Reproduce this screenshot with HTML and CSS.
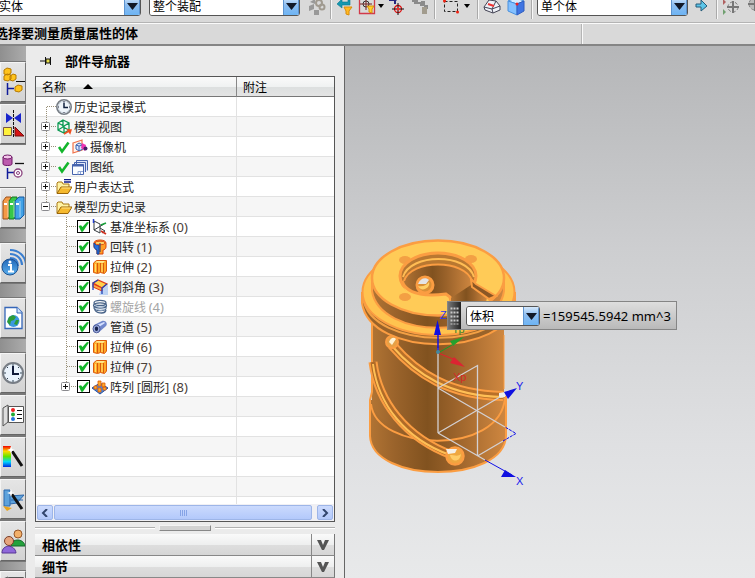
FILE: index.html
```html
<!DOCTYPE html>
<html lang="zh-CN">
<head>
<meta charset="utf-8">
<title>部件导航器</title>
<link rel="stylesheet" href="styles.css">
</head>
<body>
<svg class="defs" aria-hidden="true">
  <defs>
    <linearGradient id="body" x1="0" x2="1"><stop offset="0" stop-color="#b17434"/><stop offset=".18" stop-color="#9a632b"/><stop offset=".42" stop-color="#81521f"/><stop offset=".62" stop-color="#9a622a"/><stop offset="1" stop-color="#cf8740"/></linearGradient>
    <linearGradient id="arrowBg" x1="0" x2="0" y1="0" y2="1"><stop offset="0" stop-color="#d5e8fb"/><stop offset=".45" stop-color="#8dbdf0"/><stop offset="1" stop-color="#6db4f4"/></linearGradient>
    <linearGradient id="blueBall" x1="0" x2="0" y1="0" y2="1"><stop offset="0" stop-color="#2167b8"/><stop offset="1" stop-color="#5bb0ee"/></linearGradient>
    <linearGradient id="rainbow" x1="0" x2="0" y1="0" y2="1"><stop offset="0" stop-color="#f20000"/><stop offset=".25" stop-color="#ffd800"/><stop offset=".5" stop-color="#5ee600"/><stop offset=".75" stop-color="#00d8ff"/><stop offset="1" stop-color="#0028e0"/></linearGradient>
  </defs>
  <symbol id="drop" viewBox="0 0 16 18"><rect width="16" height="18" fill="url(#arrowBg)"/><path d="M.5 0v18M15.500 0v18" stroke="#5d93cf"/><path d="M3 6h11l-5.500 7z" fill="#111827"/></symbol>
  <symbol id="g-first" viewBox="0 0 20 19"><path d="M10.500 10v9M11 9.500h9" stroke="#999078" stroke-dasharray="1 1" fill="none"/></symbol>
  <symbol id="g-mid" viewBox="0 0 20 19"><path d="M10.500 0v19M11 9.500h9" stroke="#999078" stroke-dasharray="1 1" fill="none"/></symbol>
  <symbol id="g-plus" viewBox="0 0 20 19"><path d="M10.500 0v19M11 9.500h9" stroke="#999078" stroke-dasharray="1 1"/><rect x="5.500" y="5.500" width="8" height="8" rx="1" fill="#fff" stroke="#8a8a8e"/><path d="M7 9.500h5M9.500 7v5" stroke="#111"/></symbol>
  <symbol id="g-endplus" viewBox="0 0 20 19"><path d="M10.500 0v6M11 9.500h9" stroke="#999078" stroke-dasharray="1 1"/><rect x="5.500" y="5.500" width="8" height="8" rx="1" fill="#fff" stroke="#8a8a8e"/><path d="M7 9.500h5M9.500 7v5" stroke="#111"/></symbol>
  <symbol id="g-minus" viewBox="0 0 20 19"><path d="M10.500 0v6M11 9.500h9" stroke="#999078" stroke-dasharray="1 1"/><rect x="5.500" y="5.500" width="8" height="8" rx="1" fill="#fff" stroke="#8a8a8e"/><path d="M7 9.500h5" stroke="#111"/></symbol>
  <symbol id="clock" viewBox="0 0 16 16"><circle cx="8" cy="8" r="7.200" fill="#eef4fa" stroke="#777d85" stroke-width="1.600"/><circle cx="8" cy="8" r="5.800" fill="none" stroke="#b9c4d0" stroke-width=".7"/><path d="M8 3.500V8.500h4" fill="none" stroke="#10213f" stroke-width="1.500"/><path d="M8 2v1M8 13v1M2 8h1M13 8h1" stroke="#334"/></symbol>
  <symbol id="mview" viewBox="0 0 16 16"><path d="M7 1l6 3v7l-5 3-6-3V4zM2 4l6 3 5-3M8 7v7M7 1v7l-5 3M7 8l6 3" fill="none" stroke="#0c9a52" stroke-width="1.300"/><path d="M8 15l5-3M15 11l-3 0 2 3z" stroke="#f05020" fill="#f05020" stroke-width="1.500"/></symbol>
  <symbol id="tick" viewBox="0 0 16 16"><path d="M3 8l3 4.500L12.500 3.500" fill="none" stroke="#13b52b" stroke-width="2.600"/></symbol>
  <symbol id="camera" viewBox="0 0 16 16"><path d="M1 4l9-3v10L1 14z" fill="#fff4ec" stroke="#f0714a" stroke-width="1.200"/><path d="M4 6l3-2 4 2v4l-4 2-3-2zM4 6l3 1 4-1M7 7v5" fill="#dce8ff" stroke="#3d62b0"/><path d="M10 4l4 2-1 6-4-3z" fill="#ef35b4"/><circle cx="13.500" cy="9.500" r="2" fill="#442066"/></symbol>
  <symbol id="sheet" viewBox="0 0 16 16"><path d="M4.500 11V1.500h11v10M2.500 13V3.500h11V13" fill="#dfe6f8" stroke="#4563ad"/><path d="M.5 5.500h11v10H.5z" fill="#fafcff" stroke="#4563ad"/><path d="M.5 6.500h11" stroke="#4563ad" stroke-width="2"/><path d="M6 12.500h5M6 12.500v3M8.500 13v2" stroke="#8fa6d6"/></symbol>
  <symbol id="folder" viewBox="0 0 16 16"><path d="M1 14V4l1-1h4l1 2h6v3" fill="#fff3a4" stroke="#a97815"/><path d="M1 14.500l4-6.500h11l-4 6.500z" fill="#f5b92e" stroke="#9a6509"/><path d="M5.500 9h9" stroke="#ffe489"/></symbol>
  <symbol id="folderx" viewBox="0 0 16 16"><use href="#folder"/><path d="M8 .5h7M8 3h7" stroke="#111b8a" stroke-width="1.300"/></symbol>
  <symbol id="csys" viewBox="0 0 16 16"><path d="M2 2v9l6 3V5zM2 11l10-6M8 9l5 3-3 2" fill="none" stroke="#333a3f"/><path d="M1.500 4V0" stroke="#2440d0" stroke-width="1.500"/><path d="M9 6l5-2" stroke="#1ba13c" stroke-width="1.600"/><path d="M9 12l5 3" stroke="#d03020" stroke-width="1.600"/></symbol>
  <symbol id="revolve" viewBox="0 0 16 16"><path d="M2 4c0-4 12-4 12 0v4c0 2-2 3-3 3v4H5v-4c-2-1-3-2-3-4z" fill="#ff9d25" stroke="#d9440d"/><path d="M2 4c1 2 4 2 5 2v9H5v-4c-2-1-3-2-3-4z" fill="#2870dc" stroke="#1746a0"/><ellipse cx="8" cy="4" rx="5" ry="1.800" fill="#ffd367" stroke="#df5618"/><path d="M8 4v9" stroke="#17327c"/></symbol>
  <symbol id="extrude" viewBox="0 0 16 16"><path d="M1.500 4l3-2.500h10V12l-2 2.500-4-1-3 1-4-1z" fill="#ffa726" stroke="#dc5a0a"/><path d="M3 3.500l2-1.500h8l-2 2z" fill="#ffe88c"/><path d="M5.500 4v10M8.500 4v9M11.500 4v10" stroke="#d95a0c"/><path d="M3.500 5v8M10 5v8" stroke="#ffe06a"/></symbol>
  <symbol id="chamfer" viewBox="0 0 16 16"><path d="M9 10l7-4v10H7z" fill="#bdd3f4"/><path d="M1 4l5-3 9 4-5 4z" fill="#ffd04e" stroke="#e23919" stroke-width="1.300"/><path d="M1 5l9 4v3L1 8z" fill="#ffab42" stroke="#e23919"/><path d="M1 11V4l5-3M10 15V9l5-4" fill="none" stroke="#2144ba" stroke-width="1.300"/></symbol>
  <symbol id="helix" viewBox="0 0 16 16"><g fill="none" stroke="#496489" stroke-width="1.300"><ellipse cx="8" cy="4" rx="6" ry="2.600"/><ellipse cx="8" cy="6.500" rx="6.500" ry="2.600"/><ellipse cx="8" cy="9" rx="6" ry="2.600"/><path d="M3 10c-1 4 10 6 11 1"/></g><path d="M3 6c4 3 8 3 11 0M3 9c4 3 8 3 11 0" fill="none" stroke="#a8bfda"/></symbol>
  <symbol id="tube" viewBox="0 0 16 16"><path d="M2 6l8-4c4-1 6 3 4 5l-8 7z" fill="#7187cb"/><path d="M5 6l7-3 1 1-6 4z" fill="#d5e0ff"/><ellipse cx="4.500" cy="9.800" rx="3.500" ry="4" fill="#9aaadc" stroke="#4c5b98"/><ellipse cx="4.500" cy="9.800" rx="1.700" ry="2.200" fill="#18234d"/></symbol>
  <symbol id="pattern" viewBox="0 0 16 16"><path d="M0 9l8-5 8 5-8 6z" fill="#4c87da" stroke="#2351a1"/><g fill="#ffab28" stroke="#dc5a0a" stroke-width=".8"><path d="M6 2h3v5H6zM2 7h3v3H2zM10 4h3v4h-3zM6 9h3v4H6zM11 8h3v3h-3z"/></g></symbol>
</svg>

<header class="toolbar">
  <label class="combo filter"><select aria-label="类型过滤器"><option>实体</option></select><svg><use href="#drop"/></svg></label>
  <label class="combo scope"><select aria-label="选择范围"><option>整个装配</option></select><svg><use href="#drop"/></svg></label>
  <button class="tool" aria-label="部件间链接" disabled><svg viewBox="0 0 18 18"><path d="M1 8l5-2v5l-5 2zM6 12h5v5H6zM2 4l5-3v5z" fill="#999"/><circle cx="11" cy="5" r="3" fill="none" stroke="#a09a90" stroke-width="2"/><circle cx="14" cy="9" r="2.500" fill="none" stroke="#a09a90" stroke-width="2"/></svg></button>
  <i class="rule"></i>
  <button class="tool" aria-label="重置过滤器"><svg viewBox="0 0 18 18"><path d="M6 1v3h6V1h2v6H6v3L1 6z" fill="#1597b0" stroke="#08788f" stroke-width=".6"/><path d="M8 9h8l-3 4v4l-3-1v-3z" fill="#ffb923" stroke="#d98c0b"/></svg></button>
  <button class="tool" aria-label="选择过滤"><svg viewBox="0 0 18 18"><path d="M1.500 0v15.500h15V0" fill="none" stroke="#d23a4a" stroke-width="1.300"/><circle cx="8" cy="6" r="3" fill="none" stroke="#333"/><path d="M2 6h12M8 0v12" stroke="#722"/><path d="M9 8h7l-2 3v4l-3-1v-3z" fill="#ffd32b" stroke="#d98c0b"/></svg></button>
  <svg class="caret" viewBox="0 0 6 4"><path d="M0 0h6L3 4z"/></svg>
  <button class="tool wide" aria-label="捕捉点"><svg viewBox="0 0 18 18"><path d="M1 2l6 0-2-3M7 2v4" fill="none" stroke="#26277e" stroke-width="2"/><circle cx="10" cy="11" r="3.500" fill="none" stroke="#d11" stroke-width="1.300"/><path d="M4 11h12M10 5v12" stroke="#111"/><circle cx="10" cy="11" r="1.500" fill="#f22"/></svg></button>
  <button class="tool" aria-label="路径" disabled><svg viewBox="0 0 18 18"><path d="M0 1h6v3h3V3h4v4h3v4h-4V8H8V6H2V4H0z" fill="#8b8b8b"/><path d="M10 9h5v7h-5z" fill="#a29c8e"/></svg></button>
  <i class="rule"></i>
  <button class="tool wide" aria-label="矩形选择"><svg viewBox="0 0 18 18"><path d="M2.500 3.500h13v10h-13z" fill="none" stroke="#222" stroke-dasharray="3 2"/><circle cx="2.500" cy="3" r="1.500" fill="#e21"/><circle cx="15.500" cy="14" r="1.500" fill="#e21"/></svg></button>
  <svg class="caret" viewBox="0 0 6 4"><path d="M0 0h6L3 4z"/></svg>
  <i class="rule gap"></i>
  <button class="tool" aria-label="线框"><svg viewBox="0 0 18 18"><path d="M1 9l5-7 7 1 4 5v4l-7 3-8-3z" fill="#eef1f7" stroke="#445"/><path d="M1 9l8 2 8-3M9 11l1 4M9 11l4-8" fill="none" stroke="#445"/><path d="M5 6l6 2" stroke="#e33" stroke-width="2"/></svg></button>
  <button class="tool wide" aria-label="着色"><svg viewBox="0 0 18 18"><path d="M1 3l8-3 8 3-7 3z" fill="#d7ecff" stroke="#4a90dd"/><path d="M1 3l9 3v11l-9-4z" fill="#83c0ff" stroke="#4a90dd"/><path d="M10 6l7-3v10l-7 4z" fill="#4075e2" stroke="#315fc0"/><circle cx="10" cy="6" r="1.500" fill="#e22"/></svg></button>
  <i class="rule"></i>
  <label class="combo rulebox"><select aria-label="体规则"><option>单个体</option></select><svg><use href="#drop"/></svg></label>
  <button class="tool wide" aria-label="下一个"><svg viewBox="0 0 18 18"><path d="M4 6h5V2l6 6-6 5v-4H4z" fill="#5cc5e8" stroke="#245b78"/></svg></button>
  <i class="rule"></i>
  <button class="tool" aria-label="移动" disabled><svg viewBox="0 0 18 18"><path d="M1 1l3 3-3 3z" fill="#b06060"/><path d="M1 11l3 3-3 3z" fill="#70a070"/><circle cx="11" cy="9" r="5" fill="none" stroke="#777" stroke-dasharray="3 2"/><path d="M5 9h12M11 3v12" stroke="#777" stroke-width="2"/></svg></button>
  <button class="tool wide" aria-label="旋转" disabled><svg viewBox="0 0 18 18"><circle cx="9" cy="6" r="6" fill="#bbb" stroke="#888" stroke-dasharray="3 2"/><path d="M2 6h14M9 0v13" stroke="#777" stroke-width="2"/></svg></button>
</header>
<div class="cue"><p>选择要测量质量属性的体</p><p></p></div>

<main class="work">
  <nav class="tabs" aria-label="资源条">
    <button class="tab lead" aria-label="装配导航器"><svg viewBox="0 0 24 30"><g fill="#ffc31c" stroke="#b77a00"><path d="M3 3l3-2 4 1v4l-3 2-4-1zM3 9l3-2 4 1v4l-3 2-4-1zM9 9l3-2 3 1v4l-3 2-3-1z"/><path d="M14 20l3-2 4 1v4l-3 2-4-1z"/></g><path d="M15 14.500h9" stroke="#111"/><path d="M6.500 16v12M7 21.500h6" stroke="#111c9a" stroke-width="1.500"/></svg></button>
    <button class="tab" aria-label="约束导航器"><svg viewBox="0 0 24 30"><path d="M5 4l7 5-7 5zM20 4l-7 5 7 5z" fill="#1925cc"/><path d="M12.500 1v27" stroke="#111" stroke-dasharray="3 1"/><path d="M2.500 18.500h8v8h-8z" fill="#fff13b" stroke="#754"/><path d="M14 18l9 9h-9z" fill="#d81313" stroke="#711"/></svg></button>
    <button class="tab active" aria-label="部件导航器"><svg viewBox="0 0 24 30"><path d="M2 6v7c0 2 9 2 9 0V6" fill="#bc5cae" stroke="#6f1967"/><ellipse cx="6.500" cy="6" rx="4.500" ry="2" fill="#f2c7e9" stroke="#6f1967"/><path d="M14 12.500h9" stroke="#111" stroke-width="1.300"/><path d="M6.500 17v11M7 21.500h6" stroke="#111c9a" stroke-width="1.500"/><circle cx="17" cy="22" r="4" fill="#fff" stroke="#89417d" stroke-width="1.300"/><circle cx="17" cy="22" r="1.500" fill="none" stroke="#89417d"/></svg></button>
    <button class="tab" aria-label="重用库"><svg viewBox="0 0 24 30"><path d="M2 8l3-4h5v18l-3 4H2z" fill="#f49a47" stroke="#9a511a"/><path d="M8 8l3-4h5v18l-3 4H8z" fill="#37c848" stroke="#167522"/><path d="M14 8l4-4h5v18l-4 4h-5z" fill="#41a2e7" stroke="#17589e"/><path d="M3 11h3M9 11h3M15 11h3" stroke="#fff" stroke-width="2"/><path d="M7 8v16M13 8v16M19 8v16" stroke="#fff8"/></svg></button>
    <button class="tab spaced" aria-label="信息"><svg viewBox="0 0 24 30"><path d="M9 10c5 0 8 3 8 8M9 6c7 0 12 5 12 11M9 2c9 0 15 6 16 14" fill="none" stroke="#397ed0" stroke-width="2"/><circle cx="9" cy="19" r="8" fill="url(#blueBall)" stroke="#1c5292"/><path d="M7 17h3v6M7 23.500h6" fill="none" stroke="#fff" stroke-width="2"/><circle cx="9" cy="14" r="1.500" fill="#fff"/></svg></button>
    <button class="tab spaced" aria-label="网页浏览器"><svg viewBox="0 0 24 30"><path d="M4 4.500h12l5 5v16H4z" fill="#fff" stroke="#3566b8" stroke-width="1.300"/><path d="M16 4v6h5" fill="#cfe2fb" stroke="#3566b8"/><circle cx="12.500" cy="18" r="6" fill="#3c99df"/><path d="M8 14l4-2 3 2-2 3-3 1-1 4-3-3zM15 17l3 0-2 5-3-1z" fill="#2e9c38"/></svg></button>
    <button class="tab spaced" aria-label="历史记录"><svg viewBox="0 0 24 30"><circle cx="12" cy="15" r="10" fill="#eaf3fc" stroke="#777d85" stroke-width="2"/><path d="M12 8v8h6" fill="none" stroke="#111a38" stroke-width="2"/><path d="M12 6v2M12 22v2M3 15h2M19 15h2M6 9l1 1M18 9l-1 1M6 21l1-1M18 21l-1-1" stroke="#345"/></svg></button>
    <button class="tab" aria-label="系统材料"><svg viewBox="0 0 24 30"><path d="M2 8l5-3v17l-5 4z" fill="#ddd" stroke="#555"/><path d="M7.500 6.500h15v16h-15z" fill="#fff" stroke="#555"/><circle cx="12" cy="10" r="2" fill="#e22"/><circle cx="12" cy="14.500" r="2" fill="#21aa35"/><circle cx="12" cy="19" r="2" fill="#2474dd"/><path d="M16 10.500h5M16 14.500h5M16 18.500h5" stroke="#111"/></svg></button>
    <button class="tab" aria-label="可视化"><svg viewBox="0 0 24 30"><path d="M2 4h8v21H2z" fill="url(#rainbow)"/><path d="M11 9l10 15" stroke="#111" stroke-width="3"/><path d="M10 4l1 3 3 1-3 1-1 3-1-3-3-1 3-1z" fill="#fff"/></svg></button>
    <button class="tab" aria-label="场景"><svg viewBox="0 0 24 30"><path d="M3 6h6v16H3zM9 12l14-1-7 8-7 1M10 16h12" fill="#5da2dc" stroke="#2d68ac"/><path d="M2 22l9 2-5 3z" fill="#e8a31c"/><path d="M10 9l11 16" stroke="#111" stroke-width="3"/><path d="M10 5l1 3 3 1-3 1-1 3-1-3-3-1 3-1z" fill="#fff"/></svg></button>
    <button class="tab" aria-label="角色"><svg viewBox="0 0 24 30"><circle cx="17" cy="8" r="4" fill="#f3b06a" stroke="#96572a"/><path d="M10 20c0-8 13-8 14 0z" fill="#24a13c" stroke="#12682a"/><circle cx="8" cy="15" r="4.500" fill="#e6a47c" stroke="#7a3d28"/><path d="M1 27c0-9 13-9 14 0z" fill="#8f68da" stroke="#563595"/></svg></button>
    <button class="tab late" aria-label="更多"><svg viewBox="0 0 24 30"><path d="M2 3l5-2v20H2z" fill="#ddd" stroke="#555"/><path d="M7.500 1.500h15v15h-15z" fill="#fff" stroke="#555"/><path d="M9 3h12v10H9z" fill="#e23"/><path d="M12 3h5v10h-5z" fill="#9cf"/></svg></button>
  </nav>

  <section class="panel">
    <h1 class="title"><svg viewBox="0 0 12 10"><path d="M0 5h5M5.500 1v8M10.500 1v8M6 3h4v4H6z" fill="#e8df4b" stroke="#111"/></svg>部件导航器</h1>
    <div class="tree">
      <div class="rows">
        <table>
          <colgroup><col class="c-name"><col></colgroup>
          <thead><tr><th>名称<svg class="sort" viewBox="0 0 10 5"><path d="M5 0l5 5H0z"/></svg></th><th>附注</th></tr></thead>
          <tbody>
            <tr><td><div class="node"><svg class="guide"><use href="#g-first"/></svg><svg class="ic"><use href="#clock"/></svg><span>历史记录模式</span></div></td><td></td></tr>
            <tr><td><div class="node"><button class="twist" aria-label="展开"><svg class="guide"><use href="#g-plus"/></svg></button><svg class="ic"><use href="#mview"/></svg><span>模型视图</span></div></td><td></td></tr>
            <tr><td><div class="node"><button class="twist" aria-label="展开"><svg class="guide"><use href="#g-plus"/></svg></button><svg class="ic"><use href="#tick"/></svg><svg class="ic"><use href="#camera"/></svg><span>摄像机</span></div></td><td></td></tr>
            <tr><td><div class="node"><button class="twist" aria-label="展开"><svg class="guide"><use href="#g-plus"/></svg></button><svg class="ic"><use href="#tick"/></svg><svg class="ic"><use href="#sheet"/></svg><span>图纸</span></div></td><td></td></tr>
            <tr><td><div class="node"><button class="twist" aria-label="展开"><svg class="guide"><use href="#g-plus"/></svg></button><svg class="ic"><use href="#folderx"/></svg><span>用户表达式</span></div></td><td></td></tr>
            <tr><td><div class="node"><button class="twist" aria-label="折叠"><svg class="guide"><use href="#g-minus"/></svg></button><svg class="ic"><use href="#folder"/></svg><span>模型历史记录</span></div></td><td></td></tr>
            <tr><td><label class="node sub"><svg class="guide"><use href="#g-mid"/></svg><input type="checkbox" checked><svg class="ic"><use href="#csys"/></svg><span>基准坐标系 <b>(0)</b></span></label></td><td></td></tr>
            <tr><td><label class="node sub"><svg class="guide"><use href="#g-mid"/></svg><input type="checkbox" checked><svg class="ic"><use href="#revolve"/></svg><span>回转 <b>(1)</b></span></label></td><td></td></tr>
            <tr><td><label class="node sub"><svg class="guide"><use href="#g-mid"/></svg><input type="checkbox" checked><svg class="ic"><use href="#extrude"/></svg><span>拉伸 <b>(2)</b></span></label></td><td></td></tr>
            <tr><td><label class="node sub"><svg class="guide"><use href="#g-mid"/></svg><input type="checkbox" checked><svg class="ic"><use href="#chamfer"/></svg><span>倒斜角 <b>(3)</b></span></label></td><td></td></tr>
            <tr><td><label class="node sub dim"><svg class="guide"><use href="#g-mid"/></svg><input type="checkbox" checked><svg class="ic"><use href="#helix"/></svg><span>螺旋线 <b>(4)</b></span></label></td><td></td></tr>
            <tr><td><label class="node sub"><svg class="guide"><use href="#g-mid"/></svg><input type="checkbox" checked><svg class="ic"><use href="#tube"/></svg><span>管道 <b>(5)</b></span></label></td><td></td></tr>
            <tr><td><label class="node sub"><svg class="guide"><use href="#g-mid"/></svg><input type="checkbox" checked><svg class="ic"><use href="#extrude"/></svg><span>拉伸 <b>(6)</b></span></label></td><td></td></tr>
            <tr><td><label class="node sub"><svg class="guide"><use href="#g-mid"/></svg><input type="checkbox" checked><svg class="ic"><use href="#extrude"/></svg><span>拉伸 <b>(7)</b></span></label></td><td></td></tr>
            <tr><td><div class="node sub"><button class="twist" aria-label="展开"><svg class="guide"><use href="#g-endplus"/></svg></button><input type="checkbox" checked id="p8"><svg class="ic"><use href="#pattern"/></svg><label for="p8">阵列 <b>[</b>圆形<b>] (8)</b></label></div></td><td></td></tr>
            <tr><td></td><td></td></tr>
            <tr><td></td><td></td></tr>
            <tr><td></td><td></td></tr>
            <tr><td></td><td></td></tr>
            <tr><td></td><td></td></tr>
            <tr><td></td><td></td></tr>
          </tbody>
        </table>
      </div>
      <div class="hscroll">
        <button aria-label="向左滚动"><svg viewBox="0 0 8 8"><path d="M6 0L2 4l4 4"/></svg></button>
        <div class="thumb"><i></i><i></i><i></i><i></i></div>
        <button aria-label="向右滚动"><svg viewBox="0 0 8 8"><path d="M2 0l4 4-4 4"/></svg></button>
      </div>
    </div>
    <div class="splitter"><hr><i></i><hr></div>
    <button class="fold"><span>相依性</span><svg viewBox="0 0 12 10"><path d="M0 0h4l2 5 2-5h4L7 10H5z"/></svg></button>
    <button class="fold"><span>细节</span><svg viewBox="0 0 12 10"><path d="M0 0h4l2 5 2-5h4L7 10H5z"/></svg></button>
  </section>

  <section class="view">
    <svg class="model" viewBox="355 230 180 265" role="img" aria-label="零件模型">
      <path d="M370 400V436C372 484 504 484 506 436V396z" fill="url(#body)"/>
      <path d="M372 315V400C380 450 496 450 504 400V315z" fill="url(#body)"/>
      <g fill="none" stroke="#fb9d42" stroke-width="2">
        <path d="M372 318V392L370 400V436C372 484 504 484 506 436V396"/>
        <path d="M371 404C376 452 500 456 505 398"/>
        <path d="M504 335V389" stroke-width="1"/>
      </g>
      <g fill="none">
        <path d="M392 345C417 374 449 395 503 396" stroke="#fb9d42" stroke-width="10"/>
        <path d="M392 345C417 374 449 395 503 396" stroke="#b87029" stroke-width="6"/>
        <path d="M392 346C417 375 449 396 503 397" stroke="#ffbf55" stroke-width="2"/>
        <path d="M373 362C378 402 406 438 452 455" stroke="#fb9d42" stroke-width="9"/>
        <path d="M373 362C378 402 406 438 452 455" stroke="#b06b28" stroke-width="5"/>
        <path d="M373 364C378 404 405 439 450 455" stroke="#ffbf55" stroke-width="2"/>
      </g>
      <circle cx="392" cy="342" r="6" fill="#e6a146" stroke="#fb9d42" stroke-width="2"/>
      <path d="M389 342c2-5 5-5 7-3l-4 6z" fill="#fff1d0"/>
      <circle cx="455" cy="456" r="8.500" fill="#efa740" stroke="#fb9d42" stroke-width="2.500"/>
      <path d="M450 455c1 7 10 8 11-1-3 3-7 1-11 1z" fill="#ffcc68"/>
      <path d="M446 449l11 0-2 4-7 1z" fill="#f5efe6"/>
      <path d="M499 393l6-1v5l-6 1z" fill="#eee"/>

      <path d="M362 293V303C370 358 507 358 515 303V293z" fill="#99632a" stroke="#fb9d42" stroke-width="2"/>
      <path d="M363 298C371 351 506 351 514 298" fill="none" stroke="#f3a044" stroke-width="2"/>
      <ellipse cx="438.500" cy="292" rx="76" ry="43" fill="#ffc34f" stroke="#fb9d42" stroke-width="2"/>
      <path d="M372 278V291C380 340 497 340 504 291V278z" fill="url(#body)" stroke="#fb9d42" stroke-width="2"/>
      <ellipse cx="438" cy="278" rx="66" ry="37.500" fill="#ffcb57" stroke="#fb9d42" stroke-width="2.500"/>
      <g fill="#f3a044"><ellipse cx="405" cy="260" rx="6" ry="4"/><ellipse cx="471" cy="259" rx="6" ry="4"/><ellipse cx="405" cy="297" rx="6" ry="4"/></g>
      <ellipse cx="438" cy="276" rx="38" ry="23" fill="#b97831" stroke="#fb9d42" stroke-width="3"/>
      <path d="M404 282C409 258 465 258 472 282V290L456 299H426C412 296 406 290 404 282z" fill="url(#body)"/>
      <path d="M403 277C410 253 467 253 474 277" fill="none" stroke="#ffbd54" stroke-width="2"/>
      <path d="M404 281C411 259 465 259 472 281" fill="none" stroke="#fb9d42" stroke-width="2"/>
      <path d="M403 283C410 296 424 296 446 294l4 3 1 5h-20C416 300 404 294 403 283z" fill="#ffcb57"/>
      <circle cx="425" cy="285" r="8" fill="#d99037" stroke="#fb9d42" stroke-width="3"/>
      <path d="M418 284c2-6 8-7 11-4l-3 4z" fill="#e4e4e5"/>
      <path d="M418 286c5 1 9-1 11-4 2 6-8 11-11 4z" fill="#ffd067"/>
      <path d="M402 281C406 293 420 297 446 294l4 3 1 5" fill="none" stroke="#fb9d42" stroke-width="3"/>
      <path d="M451 298l20-13 16 13-2 8h-34z" fill="url(#body)"/>
      <path d="M471 279l1 8 17 12 7-3-20-12z" fill="#8b5725" stroke="#fb9d42" stroke-width="2"/>

      <g fill="none" stroke="#d3d0d2" stroke-width="1.300"><path d="M438 348V433M438 388L477.500 365.500V456M438 388L505 427M438 433L500 397M438 433L485 460M477.500 456L503 441"/></g>
      <g fill="none" stroke="#1010e8"><path d="M485 460L512 475"/><path d="M503 441L516 433.500L505 427" stroke-dasharray="3 1"/><path d="M438 353V325" stroke-width="1.500"/></g>
      <path d="M437.500 320l3.500 15h-7zM517 388l-13 4 4 7zM516 477l-11-7-4 7z" fill="#1010e0"/>
      <path d="M438 353l14-8" stroke="#18a028"/><path d="M464 337l-14 4 3 5z" fill="#25a02d"/>
      <path d="M438 353l15 6" stroke="#e4202d"/><path d="M465 367l-11-10-4 6z" fill="#dc2432"/>
      <circle cx="438" cy="352" r="2" fill="#4389a0"/>
      <g class="axis"><text x="440" y="319" fill="#3037ee">Z</text><text x="452" y="333" fill="#39852c">Yp</text><text x="453" y="381" fill="#d52a27">Xp</text><text x="516" y="390" fill="#1c1cec">Y</text><text x="516" y="485" fill="#1c1cec">X</text></g>
    </svg>
    <div class="measure">
      <svg class="grip" viewBox="0 0 13 26"><path d="M3.500 5v17M6.500 5v17M9.500 5v17" stroke="#c9c9c9" stroke-width="2" stroke-dasharray="2 2"/></svg>
      <label class="combo"><select aria-label="测量类型"><option>体积</option></select><svg><use href="#drop"/></svg></label>
      <output>=159545.5942 mm^3</output>
    </div>
  </section>
</main>
</body>
</html>
```
FILE: styles.css
```css
* { box-sizing: border-box; }
html, body { height: 100%; margin: 0; }
body {
  display: flex;
  flex-direction: column;
  overflow: hidden;
  background: #ebebeb;
  color: #000;
  font: 12px/16px "Noto Sans CJK SC", sans-serif;
}
svg { display: block; flex: none; }
button, select, input { margin: 0; padding: 0; font: inherit; color: inherit; }
button { border: 0; background: none; }
.defs { position: absolute; width: 0; height: 0; }

/* toolbar */
.toolbar {
  display: flex;
  flex: none;
  align-items: flex-end;
  height: 23px;
  padding-bottom: 6px;
  overflow: hidden;
  background: #d9d9d9;
  border-bottom: 1px solid #b4b4b4;
}
.combo {
  display: grid;
  flex: none;
  height: 20px;
  overflow: hidden;
  background: #fff;
  border: 1px solid #555;
  border-radius: 3px;
}
.combo select {
  grid-area: 1 / 1;
  appearance: none;
  width: 100%;
  padding-left: 3px;
  border: 0;
  outline: 0;
  background: #fff;
  line-height: 18px;
}
.combo svg { grid-area: 1 / 1; justify-self: end; width: 16px; height: 18px; pointer-events: none; }
.filter { width: 146px; margin-left: -5px; }
.scope { width: 151px; margin: 0 6px 0 8px; }
.rulebox { width: 151px; margin-left: 2px; }
.tool { flex: none; width: 20px; margin: 0 1px; }
.tool svg { width: 18px; height: 18px; margin: 0 auto; }
.tool.wide { width: 24px; }
.rule { flex: none; width: 2px; height: 20px; margin: 0 2px -3px; background: #f8f8f8; border-left: 1px solid #aaa; }
.rule.gap { margin-left: 7px; }
.caret { width: 6px; height: 4px; margin-bottom: 8px; }

.cue {
  display: flex;
  flex: none;
  height: 23px;
  background: #d9d9d9;
  border-top: 1px solid #fafafa;
  border-bottom: 2px solid #858585;
}
.cue p { flex: 41; margin: 0 0 0 -5px; border-right: 1px solid #b5b5b5; font: bold 13px/18px "Noto Sans CJK SC", sans-serif; }
.cue p + p { flex: 12; margin: 0; border: 0; border-left: 1px solid #fafafa; }

.work { display: flex; flex: 1; min-height: 0; }

/* resource bar */
.tabs {
  display: flex;
  flex: none;
  flex-direction: column;
  gap: 2px;
  width: 26px;
  overflow: hidden;
  background: linear-gradient(90deg, #8f8f8f, #acacac);
}
.tab {
  flex: none;
  height: 40px;
  background: linear-gradient(#e5e5e5, #d3d3d3);
  border: 1px solid #f5f5f5;
  border-right-color: #777;
  border-bottom-color: #666;
  outline: 1px solid #777;
}
.tab svg { width: 24px; height: 30px; }
.tab.lead { margin-top: 16px; }
.tab.active { background: #ebebeb; border-color: #ebebeb; outline-color: #ebebeb; }
.tab.spaced { margin-top: 13px; }
.tab.late { margin-top: 8px; }

/* navigator */
.panel {
  display: flex;
  flex: none;
  flex-direction: column;
  width: 319px;
  padding: 0 9px;
  border-right: 1px solid #666;
  background: #ebebeb;
}
.title {
  display: flex;
  flex: none;
  align-items: center;
  gap: 13px;
  height: 30px;
  margin: 0;
  padding-left: 5px;
  font: bold 13px/18px "Noto Sans CJK SC", sans-serif;
}
.title svg { width: 12px; height: 10px; }
.tree {
  display: flex;
  flex: 1;
  flex-direction: column;
  min-height: 0;
  border: 1px solid #555;
  background: #fff;
}
.rows { flex: 1; min-height: 0; overflow: hidden; }
table { width: 100%; table-layout: fixed; border-collapse: separate; border-spacing: 0; }
.c-name { width: 201px; }
th, td { height: 20px; padding: 0; border-bottom: 1px solid #e2e2e2; border-right: 1px solid #e2e2e2; }
th {
  padding-left: 6px;
  text-align: left;
  font-weight: normal;
  background: linear-gradient(#fafafa, #f0f2f2 50%, #dcdfdf 51%, #e4e4e4);
  border-bottom-color: #777;
  border-right-color: #888;
}
td:last-child, th:last-child { border-right: 0; }
tbody tr:nth-child(even) { background: #f6f6f6; }
.sort { display: inline-block; width: 10px; height: 5px; margin: 0 0 3px 17px; }
.node { display: flex; align-items: center; height: 19px; color: #222; white-space: nowrap; }
.node.sub { padding-left: 20px; }
.node span, .node label { padding-left: 2px; }
.node b { font: 13px/16px "Noto Sans", sans-serif; color: #4a4038; }
.node.dim, .node.dim b { color: #a5a5a5; }
.guide { width: 20px; height: 19px; }
.ic { width: 16px; height: 16px; }
.twist { height: 19px; }
input[type="checkbox"] {
  appearance: none;
  flex: none;
  width: 13px;
  height: 13px;
  margin: 0 2px 0 1px;
  border: 1px solid #000;
  background: #fff;
}
input[type="checkbox"]:checked::before {
  content: "";
  display: block;
  height: 11px;
  background: #12b42a;
  clip-path: polygon(5% 45%, 28% 38%, 40% 55%, 82% 8%, 100% 14%, 44% 98%, 30% 98%);
}

.hscroll { display: flex; flex: none; height: 17px; padding: 1px; gap: 1px; background: #f0f0f4; }
.hscroll button, .thumb {
  background: linear-gradient(#cbdafd, #b3c9fb);
  border: 1px solid #9db5e8;
  border-radius: 2px;
}
.hscroll button { width: 16px; }
.hscroll button svg { width: 8px; height: 8px; margin: 0 auto; fill: none; stroke: #31456d; stroke-width: 2; }
.thumb { display: flex; flex: 1; align-items: center; justify-content: center; gap: 1px; margin-right: 4px; }
.thumb i { width: 1px; height: 6px; background: #86a4e6; }

.splitter { display: flex; flex: none; align-items: center; gap: 4px; height: 12px; }
.splitter hr { flex: 1; margin: 0; border: 0; border-top: 1px solid #b0b0b0; border-bottom: 1px solid #fff; }
.splitter i { width: 52px; height: 6px; background: #d2d2d2; border: 1px solid #f2f2f2; border-right-color: #888; border-bottom-color: #888; }
.fold {
  display: flex;
  flex: none;
  align-items: center;
  height: 22px;
  padding: 0 5px 0 7px;
  background: linear-gradient(#fafafa, #eeefef 50%, #dedede 51%, #d6d6d6);
  border-right: 1px solid #777;
  border-bottom: 1px solid #888;
  text-align: left;
  font: bold 13px/18px "Noto Sans CJK SC", sans-serif;
}
.fold span { flex: 1; border-right: 1px solid #888; line-height: 21px; }
.fold svg { width: 12px; height: 10px; margin-left: 5px; fill: #555; }

/* graphics window */
.view { position: relative; flex: 1; overflow: hidden; background: linear-gradient(#b5b6b8, #cdced0 38%, #dfe0e2 75%, #e8e9ea); }
.model { position: absolute; left: 10px; top: 184px; width: 180px; height: 265px; }
.axis { font: 11px "Liberation Sans", sans-serif; }
.measure {
  position: absolute;
  left: 102px;
  top: 255px;
  display: flex;
  align-items: center;
  height: 29px;
  padding-right: 5px;
  background: linear-gradient(#dedede, #b9b9b9);
  border: 1px solid #858585;
}
.grip { width: 13px; height: 27px; background: linear-gradient(90deg, #777, #222); }
.measure .combo { width: 74px; margin: 0 3px 0 5px; }
.measure output { font: 13px/18px "Noto Sans", sans-serif; white-space: nowrap; }
```
